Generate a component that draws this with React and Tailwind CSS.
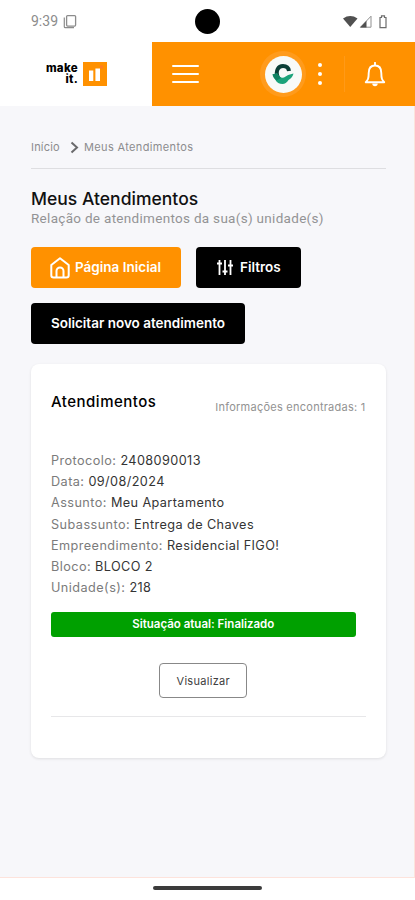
import React from "react";

const details = [
  { label: "Protocolo:", value: "2408090013" },
  { label: "Data:", value: "09/08/2024" },
  { label: "Assunto:", value: "Meu Apartamento" },
  { label: "Subassunto:", value: "Entrega de Chaves" },
  { label: "Empreendimento:", value: "Residencial FIGO!" },
  { label: "Bloco:", value: "BLOCO 2" },
  { label: "Unidade(s):", value: "218" },
];

function StatusBar() {
  return (
    <div className="relative flex h-[42px] items-center justify-between bg-white pr-[27px] pl-[31px]">
      <div className="flex items-center gap-[5px] text-[#8c8c8c]">
        <span className="font-[Roboto,sans-serif] text-[14px] leading-none">9:39</span>
        <svg width="14" height="15" viewBox="0 0 14 15" fill="none" stroke="currentColor">
          <rect x="3.6" y="1.6" width="9" height="10.5" rx="1" strokeWidth="1.3" />
          <path d="M1.3 3.5v9.2a1 1 0 0 0 1 1h8.7" strokeWidth="1.2" />
        </svg>
      </div>
      <div className="absolute top-[9px] left-[195px] h-[25px] w-[25px] rounded-full bg-black" />
      <svg width="45" height="16" viewBox="0 0 45 16" fill="none">
        <path d="M0 5.5Q7.250 .6 14.500 5.500L7.250 14z" fill="#505050" />
        <path d="M17.500 14.200L28 3.200V14.200z" stroke="#909090" strokeWidth="1" />
        <path d="M17 14.500L23.500 7.800V14.500z" fill="#505050" />
        <path d="M37 4.500h1.500V2.800h3v1.700H43v10.200h-6z" stroke="#6c6c6c" strokeWidth="1.2" />
      </svg>
    </div>
  );
}

function Header() {
  return (
    <header className="flex h-16 bg-white shadow-[0_1px_2px_rgba(0,0,0,0.08)]">
      <div className="flex w-[152px] items-center gap-[5px] pl-[45px]">
        <div className="flex w-[33px] flex-col items-end text-[11.500px] leading-none font-extrabold tracking-[0.300px] text-black">
          <span className="h-[11px] leading-[11px]">make</span>
          <span className="h-[11px] leading-[11px]">it.</span>
        </div>
        <svg width="24" height="24" viewBox="0 0 24 24">
          <rect width="24" height="24" fill="#ff9100" />
          <path d="M6 8.500h4.300V19H6z" fill="#fff" />
          <path d="M12.400 6.500h4.600v12.500h-4.600z" fill="#fff" />
          <path d="M17 3.500h3v3h-3z" fill="#ff6f3c" opacity="0.6" />
        </svg>
      </div>
      <div className="flex flex-1 items-center bg-[#ff9100] pl-5">
        <div className="flex w-[27px] flex-col gap-[6px]">
          <span className="h-[2px] rounded-full bg-white" />
          <span className="h-[2px] rounded-full bg-white" />
          <span className="h-[2px] rounded-full bg-white" />
        </div>
        <div className="ml-[61px] flex h-[46px] w-[46px] items-center justify-center rounded-full bg-[#ff9b1c]">
          <div className="flex h-[37px] w-[37px] items-center justify-center rounded-full bg-[#f8faf8]">
            <svg width="24" height="22" viewBox="0 0 24 22" fill="none">
              <path d="M6.800 14.500C4 7.500 7.500 3 12 3C15.500 3 17.500 4.800 18 8" stroke="#0b3f36" strokeWidth="4" />
              <path d="M1.500 11.500L6 10.500Q8.500 15.500 13 14.500Q16.500 11.500 22.500 10.500Q21.500 14.500 17.500 17Q15 21 11.500 21Q6.500 21 4.500 17Q2 14.500 1.500 11.500z" fill="#1ba37a" />
              <path d="M1.500 11.500L6 10L10 15L5.500 17.500Q2.500 15 1.500 11.500z" fill="#118262" />
            </svg>
          </div>
        </div>
        <div className="ml-[12px] flex flex-col gap-[5px]">
          <span className="h-1 w-1 rounded-full bg-white" />
          <span className="h-1 w-1 rounded-full bg-white" />
          <span className="h-1 w-1 rounded-full bg-white" />
        </div>
        <div className="ml-[22px] h-9 w-px bg-[#ff9a18]" />
        <svg className="ml-[19px]" width="22" height="25" viewBox="0 0 22 25" fill="none" stroke="#fff" strokeWidth="1.9" strokeLinejoin="round">
          <path d="M11 .8v2.500M1.800 20.200h18.400c-2-2.200-2.900-3.200-2.900-9.200 0-5-2.300-7.500-6.300-7.500S4.700 6 4.700 11c0 6-.9 7-2.900 9.200z" strokeLinecap="round" />
          <path d="M8.300 21.500a2.700 2.800 0 0 0 5.400 0z" fill="#fff" stroke="none" />
        </svg>
      </div>
    </header>
  );
}

function AtendimentoCard() {
  return (
    <section className="mt-5 h-[394px] rounded-[8px] bg-white px-5 pt-[27px] shadow-[0_1px_3px_rgba(0,0,0,0.1)]">
      <div className="flex justify-between">
        <h2 className="text-[15px] leading-[22px] font-medium tracking-[0.500px] text-black">Atendimentos</h2>
        <span className="mt-[6px] text-[11px] leading-5 tracking-[0.250px] text-[#929292]">
          Informações encontradas: 1
        </span>
      </div>
      <div className="mt-[33px]">
        {details.map((item) => (
          <p key={item.label} className="h-[21.200px] text-[12.700px] leading-[21.200px] tracking-[0.430px] whitespace-nowrap text-[#7b7b7b]">
            {item.label} <span className="tracking-[0.400px] text-[#343434]">{item.value}</span>
          </p>
        ))}
      </div>
      <div className="mt-[14px] mr-[10px] flex h-[25px] items-center justify-center rounded-[3px] bg-[#00a000] text-[11.500px] font-semibold text-white">
        Situação atual: Finalizado
      </div>
      <div className="mt-[26px] mr-[10px] flex justify-center">
        <button className="h-[35px] w-[88px] rounded-[4px] border border-[#888] text-[11px] tracking-[0.300px] text-[#404040]">
          Visualizar
        </button>
      </div>
      <hr className="mt-[18px] border-[#e7e7e9]" />
    </section>
  );
}

export default function App() {
  return (
    <div className="flex h-[900px] w-[415px] flex-col overflow-hidden bg-white font-[Inter,sans-serif]">
      <StatusBar />
      <Header />
      <main className="h-[772px] border-r border-b border-[#fde3dc] bg-[#f7f7fa] pr-[28.500px] pl-[31px]">
        <nav className="flex h-[63px] items-center border-b border-[#dedee1] pt-[21px] text-[11px] text-[#8c8c8e]">
          <span className="w-[39px] tracking-[0.200px]">Início</span>
          <svg className="mr-[5px]" width="9" height="13" viewBox="0 0 9 13" fill="none" stroke="#6a6a6c" strokeWidth="2">
            <path d="M1.500 1.500l5.500 5-5.500 5" />
          </svg>
          <span className="tracking-[0.350px]">Meus Atendimentos</span>
        </nav>
        <h1 className="mt-[20px] text-[17.500px] leading-[20px] font-medium tracking-[0.020px] text-[#111]">
          Meus Atendimentos
        </h1>
        <p className="font-[Roboto,sans-serif] text-[13.500px] leading-[18px] tracking-[0.300px] text-[#939395]">
          Relação de atendimentos da sua(s) unidade(s)
        </p>
        <div className="mt-[20px] flex flex-wrap gap-x-[15px] gap-y-[15px] text-[13.500px] font-semibold text-white">
          <button className="flex h-[41px] w-[150px] items-center rounded-[4px] bg-[#ff9100] pl-[19px]">
            <svg className="mr-[5px]" width="20" height="22" viewBox="0 0 20 22" fill="none" stroke="#fff" strokeWidth="2" strokeLinejoin="round">
              <path d="M1.300 8L10 1.300 18.700 8v10.200a2.300 2.300 0 0 1-2.300 2.300H3.600a2.300 2.300 0 0 1-2.300-2.300z" />
              <path d="M6.500 20v-6a3.500 3.500 0 0 1 7 0v6" />
            </svg>
            Página Inicial
          </button>
          <button className="flex h-[41px] w-[105px] items-center rounded-[4px] bg-black pl-[21px]">
            <svg className="mr-[7px]" width="16" height="17" viewBox="0 0 16 17" fill="none" stroke="#fff" strokeWidth="1.800">
              <path d="M2.500 1v15M8 1v15M13.500 1v15" />
              <path d="M0 4.500h5M5.500 12.500h5M11 6.500h5" strokeWidth="2.200" />
            </svg>
            Filtros
          </button>
          <button className="flex h-[41px] w-[214px] items-center justify-center rounded-[4px] bg-black">
            Solicitar novo atendimento
          </button>
        </div>
        <AtendimentoCard />
      </main>
      <footer className="flex flex-1 justify-center bg-white pt-[8px]">
        <div className="h-[4px] w-[109px] rounded-full bg-[#3b3b3b]" />
      </footer>
    </div>
  );
}
